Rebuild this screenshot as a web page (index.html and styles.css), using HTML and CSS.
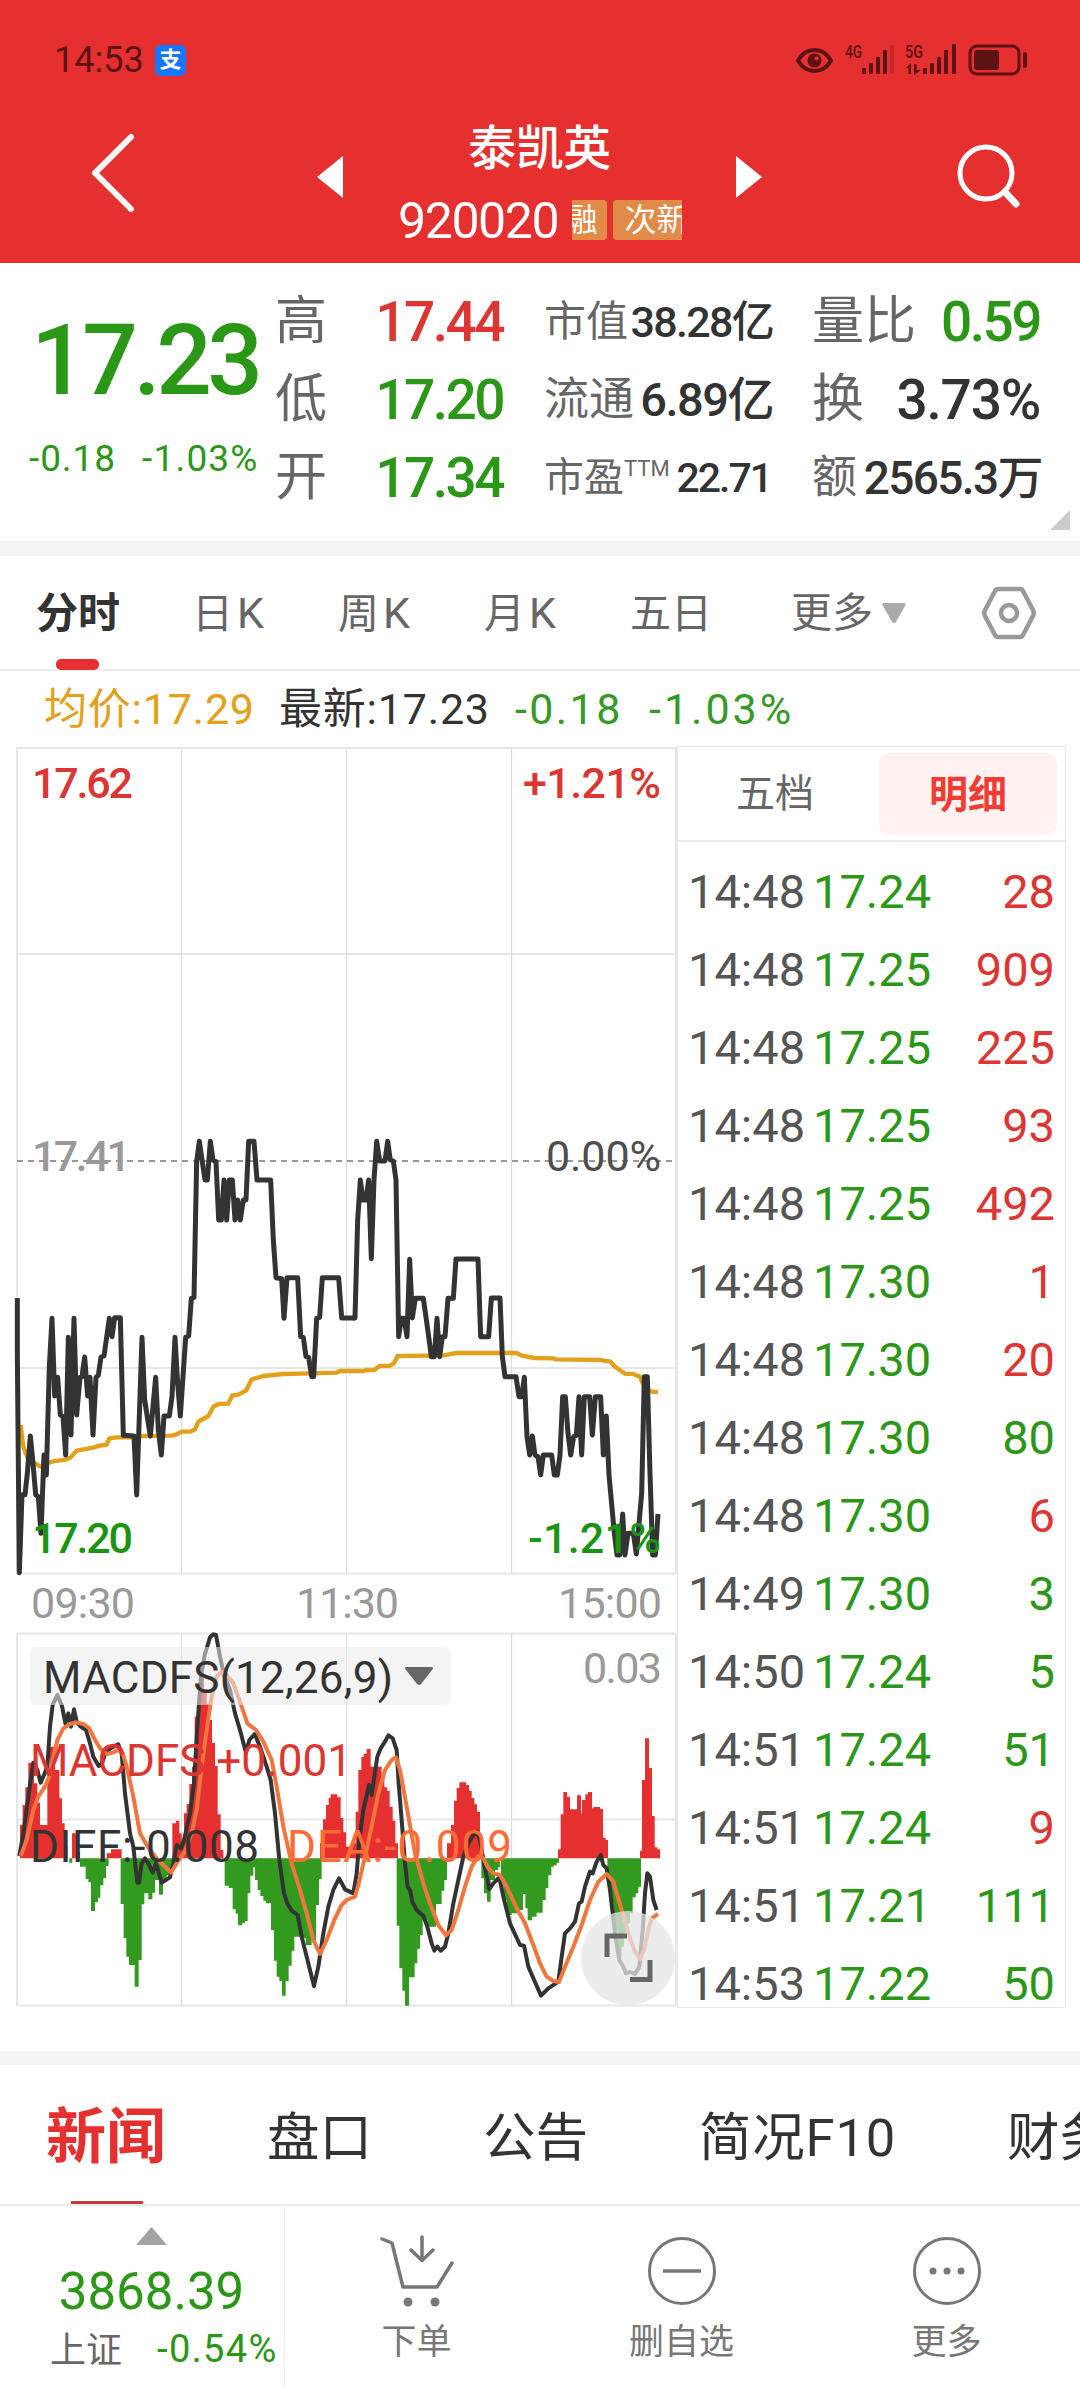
FILE: index.html
```html
<!DOCTYPE html>
<html lang="zh-CN">
  <head>
    <meta charset="UTF-8" />
    <meta name="viewport" content="width=device-width, initial-scale=1.0" />
    <title>泰凯英 920020</title>
    <link rel="stylesheet" href="styles.css">
  </head>
  <body>
    <header class="header">
      <div class="status-bar">
        <span class="clock">14:53</span>
        <span class="pay-badge">支</span>
        <svg class="status-icons" width="236" height="44" viewBox="794 38 236 44">
          <g fill="none" stroke="#5c1213" stroke-width="4">
            <path d="M798 60.500Q804 50 814.500 50T831 60.500Q825 71 814.500 71T798 60.500Z" />
            <rect x="970" y="46" width="49" height="28" rx="7" stroke-width="3" />
          </g>
          <g fill="#5c1213">
            <circle cx="814.500" cy="60.500" r="7" />
            <rect x="974" y="50" width="25" height="20" rx="3" />
            <rect x="1023" y="52" width="4" height="16" rx="2" />
            <rect x="862" y="68" width="4" height="6" rx="1" />
            <rect x="869" y="63" width="4" height="11" rx="1" />
            <rect x="876" y="57" width="4" height="17" rx="1" />
            <rect x="883" y="50" width="4" height="24" rx="1" />
            <rect x="890" y="45" width="4" height="29" rx="1" opacity=".25" />
            <rect x="923" y="68" width="4" height="6" rx="1" />
            <rect x="930" y="63" width="4" height="11" rx="1" />
            <rect x="937" y="57" width="4" height="17" rx="1" />
            <rect x="944" y="50" width="4" height="24" rx="1" />
            <rect x="952" y="44" width="4" height="30" rx="1" />
            <path d="M906 68L911 63V74H908.500V68ZM914 64H916.500V70H921L914 75Z" />
            <text class="net" x="845" y="58" textLength="17" lengthAdjust="spacingAndGlyphs">4G</text>
            <text class="net" x="905" y="58" textLength="18" lengthAdjust="spacingAndGlyphs">5G</text>
          </g>
          <circle cx="816.500" cy="58.500" r="2" fill="#e62f2f" />
        </svg>
      </div>
      <div class="title-bar">
        <svg class="back" width="52" height="84" viewBox="0 0 52 84">
          <path d="M43 6L7 42L43 78" fill="none" stroke="#fff" stroke-width="6" stroke-linecap="round" stroke-linejoin="round" />
        </svg>
        <svg class="prev" width="26" height="42" viewBox="0 0 26 42"><path d="M26 0V42L0 21Z" fill="#fff" /></svg>
        <div class="stock">
          <h1 class="stock-name">泰凯英</h1>
          <div class="stock-meta">
            <span class="stock-code">920020</span>
            <span class="tags">
              <span class="tag tag-first">融</span>
              <span class="tag tag-new">次新</span>
            </span>
          </div>
        </div>
        <svg class="next" width="26" height="42" viewBox="0 0 26 42"><path d="M0 0V42L26 21Z" fill="#fff" /></svg>
        <svg class="search" width="68" height="68" viewBox="0 0 68 68">
          <g fill="none" stroke="#fff" stroke-linecap="round">
            <circle cx="31" cy="31" r="26" stroke-width="5" />
            <path d="M50 50L61 62" stroke-width="7" />
          </g>
        </svg>
      </div>
    </header>

    <section class="quote">
      <div class="price">
        <div class="last">17.23</div>
        <div class="change"><span class="chg-abs">-0.18</span><span class="chg-pct">-1.03%</span></div>
      </div>
      <div class="col col-range">
        <div class="cell"><span class="label">高</span><b class="up">17.44</b></div>
        <div class="cell"><span class="label">低</span><b class="down">17.20</b></div>
        <div class="cell"><span class="label">开</span><b class="down">17.34</b></div>
      </div>
      <div class="col col-value">
        <div class="cell cap"><span class="label">市值</span><b>38.28亿</b></div>
        <div class="cell float"><span class="label">流通</span><b>6.89亿</b></div>
        <div class="cell pe"><span class="label">市盈<sup>TTM</sup></span><b>22.71</b></div>
      </div>
      <div class="col col-ratio">
        <div class="cell"><span class="label">量比</span><b class="down">0.59</b></div>
        <div class="cell turnover"><span class="label">换</span><b>3.73%</b></div>
        <div class="cell amount"><span class="label">额</span><b>2565.3万</b></div>
      </div>
      <svg class="expand" width="20" height="20" viewBox="0 0 20 20"><path d="M20 0V20H0Z" fill="#ccc" /></svg>
    </section>

    <nav class="periods">
      <span class="period active">分时</span>
      <span class="period">日<i>K</i></span>
      <span class="period">周<i>K</i></span>
      <span class="period">月<i>K</i></span>
      <span class="period">五日</span>
      <span class="period more">更多<svg width="24" height="20" viewBox="0 0 24 20"><path d="M1 0H23Q24 1 23 3L14 19Q12 21 10 19L1 3Q0 1 1 0Z" fill="#aaa" /></svg></span>
      <svg class="gear" width="56" height="54" viewBox="0 0 56 54">
        <g fill="none" stroke="#999" stroke-width="4.500" stroke-linejoin="round">
          <path d="M17 3H39Q41 3 42 5L52 24Q53.500 27 52 30L42 49Q41 51 39 51H17Q15 51 14 49L4 30Q2.500 27 4 24L14 5Q15 3 17 3Z" />
          <circle cx="28" cy="27" r="8" />
        </g>
      </svg>
    </nav>

    <div class="summary">
      <span class="avg">均价:17.29</span>
      <span class="latest">最新:17.23</span>
      <span class="sum-abs">-0.18</span>
      <span class="sum-pct">-1.03%</span>
    </div>

    <main class="board">
      <svg class="chart" width="677" height="1265" viewBox="0 746 677 1265">
        <!-- grid -->
        <g fill="none" stroke="#e6e6e6" stroke-width="2">
          <path d="M17 748H677M17 954H677M17 1368H677M17 1573.500H677M17 747V1574M676 747V1574" />
          <path d="M17 1633.500H677M17 1819.500H677M17 2005.500H677M17 1633V2006M676 1633V2006" />
          <path d="M181.500 748V1573M346.500 748V1573M511.500 748V1573M181.500 1633V2006M346.500 1633V2006M511.500 1633V2006" stroke-width="1.200" stroke="#dcdcdc" />
        </g>
        <path d="M17 1161H677" stroke="#999" stroke-width="1.800" stroke-dasharray="6 5" />

        <!-- average price -->
        <g fill="none" stroke="#e3a01b" stroke-width="13" stroke-linejoin="round">
          <polyline transform="translate(0 1100) scale(.33333)" points="62,975 70,1040 85,1080 105,1090 122,1100 140,1090 160,1084 200,1078 212,1072 230,1052 280,1043 295,1038 320,1034 328,1015 350,1012 400,1012 430,1008 515,1007 530,1003 545,995 570,995 585,988 595,965 625,948 640,920 655,912 685,911 697,886 715,884 738,872 755,838 790,828 850,822 930,820 1010,818 1020,813 1090,813 1100,810 1123,810 1138,798 1170,797 1182,790 1193,768 1285,767 1330,766 1370,759 1550,759 1565,767 1605,774 1660,775 1670,778 1800,780 1815,783 1830,784 1845,800 1875,821 1900,822 1920,830 1928,850 1940,868 1955,875 1974,876" />
        </g>
        <!-- price -->
        <g fill="none" stroke="#333" stroke-width="15" stroke-linejoin="round">
          <polyline transform="translate(0 1100) scale(.33333)" points="52,594 52,760 58,1418 66,1184 75,1184 82,1120 91,1008 99,1090 107,1184 115,1190 123,1300 132,1065 139,1125 148,800 156,655 164,888 173,832 181,945 189,950 197,1065 205,712 213,1005 222,655 230,945 240,832 246,830 254,771 263,888 270,832 279,1005 288,832 295,826 303,771 312,768 328,655 336,710 344,653 361,653 370,1006 402,1008 410,1185 426,712 434,900 451,1008 467,832 475,990 484,1065 492,948 508,948 516,890 525,712 533,850 541,948 557,712 566,708 574,595 582,592 590,185 598,124 615,240 622,240 631,124 639,180 648,185 656,360 664,360 672,240 680,360 688,240 697,240 705,360 713,300 721,360 730,300 738,300 746,124 762,124 771,240 812,240 820,420 828,533 845,536 852,655 861,533 893,533 902,710 910,712 918,770 926,772 935,830 941,830 950,655 959,652 967,533 1016,533 1025,654 1065,654" />
          <polyline transform="translate(340 1100) scale(.33333)" points="40,654 45,654 53,360 61,240 69,300 78,300 86,240 94,476 102,240 110,124 119,183 135,183 143,124 151,180 160,183 168,240 176,710 184,655 192,655 201,710 209,478 217,654 226,595 250,595 262,680 274,770 283,770 291,655 299,770 307,710 315,710 324,595 340,595 348,477 414,477 422,710 446,710 454,594 480,594 487,770 495,830 528,830 537,890 545,890 553,832 561,1010 569,1065 577,1008 585,1065 594,1070 602,1125 610,1065 635,1065 643,1125 652,1125 660,1065 668,890 676,890 684,1000 692,1065 701,1010 709,1006 717,890 725,1065 733,890 749,890 757,1005 766,890 782,890 790,1065 799,948 807,1125 823,1300 831,1365 839,1365 848,1242 855,1365 864,1300 880,1300 889,1362 905,1180 913,830 922,830 930,1120 938,1365 946,1365 954,1242" />
        </g>

        <!-- MACD histogram -->
        <g transform="translate(0 1580) scale(.33333)">
          <path fill="#e62f2f" d="M60 835V735H68V675H76V622H85V548H102V610H112V668H120V735H142V570H150V500H165V570H178V655H186V730H194V800H202V835ZM216 835V760H228V815H240V835ZM320 835V820H333V808H365V835ZM517 835V730H528V722H538V760H545V790H552V700H560V672H568V612H576V560H584V410H592V350H600V290H612V330H620V372H628V420H636V488H645V558H653V703H662V810H670V835ZM960 835V790H969V718H978V675H986V654H992V643H1012V652H1022V714H1030V757H1038V800H1047V835Z" />
          <path fill="#329b1f" d="M208 835V848H217V835ZM240 835V860H257V897H265V907H273V993H285V966H294V953H301V915H310V895H318V858H326V835ZM362 835V972H371V1074H379V1130H387V1155H404V1220H416V1140H425V973H433V940H445V958H457V938H465V900H477V944H489V905H500V885H513V850H520V835ZM674 835V917H686V924H698V988H707V1001H714V1036H727V1029H735V1023H743V940H751V887H760V862H765V900H773V930H781V948H790V962H798V970H813V1050H822V1142H830V1190H838V1203H846V1247H857V1203H866V1157H875V1112H883V1070H900V1075H917V1095H935V1080H948V975H957V897H965V835Z" />
        </g>
        <g transform="translate(340 1580) scale(.33333)">
          <path fill="#e62f2f" d="M25 835V800H39V790H47V695H55V570H64V531H71V521H80V507H92V560H125V585H133V622H141V632H149V680H158V722H166V790H174V835ZM321 835V790H333V735H342V662H350V624H358V607H378V615H387V632H395V654H403V673H411V695H420V835ZM654 835V808H662V703H670V636H681V650H690V688H711V646H723V700H726V660H736V643H744V636H756V685H760V681H780V687H789V773H797V780H804V835ZM900 835V812H906V600H915V475H927V564H936V708H944V802H952V808H960V835Z" />
          <path fill="#329b1f" d="M170 835V1037H178V1165H187V1232H195V1277H207V1192H224V1150H232V1106H240V1065H248V1020H262V1040H288V972H305V932H313V900H321V835ZM424 835V895H432V940H441V965H452V900H465V870H474V862H480V835ZM483 835V905H490V960H500V1005H515V1000H540V990H549V942H556V985H563V1021H576V1010H590V998H608V960H617V925H625V885H634V860H642V856H650V848H657V835ZM802 835V900H810V970H820V1050H832V1130H845V1100H852V1060H860V1030H870V1000H878V952H887V940H895V920H903V835Z" />
        </g>

        <!-- DIFF / DEA -->
        <g fill="none" stroke="#333" stroke-width="12" stroke-linejoin="round">
          <polyline transform="translate(0 1580) scale(.33333)" points="58,828 70,760 92,600 100,548 112,570 122,608 132,585 142,560 150,440 158,375 172,345 186,378 196,430 205,400 213,440 222,388 230,425 242,440 258,450 270,490 280,530 296,558 305,553 316,520 330,505 355,493 365,520 375,640 390,760 400,800 412,908 417,908 425,850 435,835 445,850 458,878 468,850 485,908 510,892 520,850 530,795 543,805 552,780 570,700 582,610 592,440 603,290 614,225 630,172 640,163 648,165 660,230 672,285 690,330 705,400 720,450 738,518 748,480 764,462 780,500 800,560 812,600 825,700 838,840 852,940 862,970 875,992 893,1005 905,1070 920,1130 942,1218 955,1160 970,1060 985,980 1000,930 1017,895 1035,928 1060,940 1070,880 1078,780 1090,690 1107,615 1115,645 1123,590 1132,530 1142,505 1155,485 1165,466 1178,475 1190,510 1196,610 1205,720 1215,850 1223,922 1230,930 1237,965 1250,990 1270,1008 1282,1040 1295,1090 1303,1112 1312,1100 1322,1112 1335,1100 1345,1060 1360,970 1375,900 1390,830 1405,790 1420,765 1432,755 1440,780 1452,850 1468,927 1480,910 1498,892 1510,950 1530,1030 1560,1095 1572,1097 1585,1160 1600,1195 1623,1247 1645,1225 1675,1205 1685,1130 1695,1060 1710,1045 1725,1025 1737,970 1745,965 1755,920 1770,875 1778,880 1790,845 1802,825 1810,855 1820,865 1830,930 1845,1060 1858,1140 1870,1160 1878,1180 1890,1176 1905,1182 1918,1160 1928,1050 1935,940 1942,880 1950,890 1960,960 1970,990" />
        </g>
        <g fill="none" stroke="#f0753f" stroke-width="12" stroke-linejoin="round">
          <polyline transform="translate(0 1580) scale(.33333)" points="62,828 80,780 100,690 115,650 135,620 148,590 158,540 172,480 190,445 210,432 228,427 250,432 268,445 285,480 300,505 320,522 340,517 355,510 368,520 380,560 400,650 420,760 440,795 465,830 490,855 513,878 530,850 555,815 575,760 590,690 605,560 620,450 635,350 650,290 665,275 680,285 700,310 720,365 742,430 768,450 790,485 815,540 830,620 850,740 875,850 900,930 920,1000 940,1080 960,1122 980,1080 1005,1015 1025,975 1040,960 1065,950 1075,915 1095,830 1115,740 1135,640 1155,570 1175,540 1188,532 1200,570 1220,680 1245,820 1270,910 1290,970 1315,1035 1338,1066 1355,1050 1375,990 1395,920 1415,860 1435,828 1450,835 1465,865 1480,880 1500,885 1520,920 1550,985 1575,1030 1600,1095 1620,1150 1640,1190 1660,1203 1677,1206 1695,1160 1720,1100 1745,1035 1770,960 1795,905 1820,882 1840,905 1865,990 1890,1075 1905,1115 1920,1137 1932,1110 1945,1050 1955,1015 1974,1002" />
        </g>

        <!-- indicator picker -->
        <rect x="30" y="1647" width="421" height="58" rx="6" fill="#ebebeb" opacity=".55" />
        <path d="M406 1667H432Q434 1668 432 1670L421 1684Q419 1686 417 1684L406 1670Q404 1668 406 1667Z" fill="#666" />

        <g class="axis">
          <text class="t-up strong" x="32" y="798" textLength="101">17.62</text>
          <text class="t-up strong" x="523" y="798" textLength="138">+1.21%</text>
          <text class="t-mute strong" x="32" y="1171" textLength="99">17.41</text>
          <text class="t-dark" x="546" y="1171" textLength="115">0.00%</text>
          <text class="t-down strong" x="32" y="1553" textLength="101">17.20</text>
          <text class="t-down strong" x="528" y="1553" textLength="133">-1.21%</text>
          <text class="t-mute" x="31" y="1618" textLength="104">09:30</text>
          <text class="t-mute" x="296" y="1618" textLength="103">11:30</text>
          <text class="t-mute" x="558" y="1618" textLength="104">15:00</text>
          <text class="t-mute" x="583" y="1683" textLength="79">0.03</text>
        </g>
        <g class="axis macd">
          <text class="t-ink" x="43" y="1693" textLength="350">MACDFS(12,26,9)</text>
          <text class="t-up" x="30" y="1776" textLength="322">MACDFS:+0.001</text>
          <text class="t-ink" x="30" y="1862" textLength="229">DIFF:-0.008</text>
          <text class="t-dea" x="287" y="1862" textLength="225">DEA:-0.009</text>
        </g>

        <!-- fullscreen button -->
        <circle cx="628" cy="1958" r="47" fill="#e6e6e6" opacity=".75" />
        <path d="M607 1957V1936H627M650 1960V1979.500H630" fill="none" stroke="#666" stroke-width="5" />
      </svg>

      <aside class="ticks">
        <div class="tick-tabs">
          <span class="tick-tab">五档</span>
          <span class="tick-tab on">明细</span>
        </div>
        <div class="tick-list">
          <div class="tick"><span>14:48</span><span class="down">17.24</span><span class="up">28</span></div>
          <div class="tick"><span>14:48</span><span class="down">17.25</span><span class="up">909</span></div>
          <div class="tick"><span>14:48</span><span class="down">17.25</span><span class="up">225</span></div>
          <div class="tick"><span>14:48</span><span class="down">17.25</span><span class="up">93</span></div>
          <div class="tick"><span>14:48</span><span class="down">17.25</span><span class="up">492</span></div>
          <div class="tick"><span>14:48</span><span class="down">17.30</span><span class="up">1</span></div>
          <div class="tick"><span>14:48</span><span class="down">17.30</span><span class="up">20</span></div>
          <div class="tick"><span>14:48</span><span class="down">17.30</span><span class="down">80</span></div>
          <div class="tick"><span>14:48</span><span class="down">17.30</span><span class="up">6</span></div>
          <div class="tick"><span>14:49</span><span class="down">17.30</span><span class="down">3</span></div>
          <div class="tick"><span>14:50</span><span class="down">17.24</span><span class="down">5</span></div>
          <div class="tick"><span>14:51</span><span class="down">17.24</span><span class="down">51</span></div>
          <div class="tick"><span>14:51</span><span class="down">17.24</span><span class="up">9</span></div>
          <div class="tick"><span>14:51</span><span class="down">17.21</span><span class="down">111</span></div>
          <div class="tick"><span>14:53</span><span class="down">17.22</span><span class="down">50</span></div>
        </div>
      </aside>
    </main>

    <nav class="info-tabs">
      <span class="info-tab current">新闻</span>
      <span class="info-tab">盘口</span>
      <span class="info-tab">公告</span>
      <span class="info-tab f10">简况F10</span>
      <span class="info-tab">财务</span>
    </nav>

    <footer class="toolbar">
      <div class="index">
        <svg width="31" height="18" viewBox="0 0 31 18"><path d="M15.500 0L31 18H0Z" fill="#a3a3a3" /></svg>
        <div class="index-value">3868.39</div>
        <div class="index-row"><span class="index-name">上证</span><span class="index-pct">-0.54%</span></div>
      </div>
      <div class="action">
        <svg width="76" height="72" viewBox="0 0 76 72">
          <g fill="none" stroke="#777" stroke-width="3.500" stroke-linecap="round" stroke-linejoin="round">
            <path d="M3 4L13 8L24 52H58L73 28" />
            <path d="M43 2V25M32 15L43 25.500L54 15" />
          </g>
          <circle cx="29" cy="67" r="4.500" fill="#777" />
          <circle cx="56" cy="67" r="4.500" fill="#777" />
        </svg>
        <span>下单</span>
      </div>
      <div class="action">
        <svg width="72" height="72" viewBox="0 0 72 72">
          <circle cx="36" cy="36" r="32.500" fill="none" stroke="#777" stroke-width="3" />
          <path d="M17 36H55" stroke="#777" stroke-width="3.500" />
        </svg>
        <span>删自选</span>
      </div>
      <div class="action">
        <svg width="72" height="72" viewBox="0 0 72 72">
          <circle cx="36" cy="36" r="32.500" fill="none" stroke="#777" stroke-width="3" />
          <g fill="#777"><circle cx="22" cy="36" r="3.500" /><circle cx="36" cy="36" r="3.500" /><circle cx="50" cy="36" r="3.500" /></g>
        </svg>
        <span>更多</span>
      </div>
    </footer>
  </body>
</html>
```
FILE: styles.css
```css
* {
  box-sizing: border-box;
}
body {
  margin: 0;
  width: 1080px;
  height: 2388px;
  overflow: hidden;
  background: #fff;
  color: #333;
  font-family: Roboto, "Noto Sans CJK SC", sans-serif;
}
svg {
  display: block;
  flex: none;
}
.up {
  color: #dc3532;
}
.down {
  color: #2b9717;
}

/* header */
.header {
  height: 263px;
  background: #e62f2f;
  color: #fff;
}
.status-bar {
  display: flex;
  align-items: center;
  height: 120px;
  padding: 0 50px 0 54px;
}
.clock {
  width: 101px;
  font-size: 36px;
  color: #5c1213;
}
.pay-badge {
  width: 31px;
  height: 31px;
  border-radius: 6px;
  background: #1677ff;
  font-size: 22px;
  font-weight: 700;
  line-height: 30px;
  text-align: center;
}
.status-icons {
  margin-left: auto;
}
.net {
  font-size: 19px;
  font-weight: 500;
}
.title-bar {
  display: flex;
  align-items: flex-start;
  height: 143px;
}
.back {
  margin: 11px 0 0 88px;
}
.prev {
  margin: 36px 0 0 177px;
}
.stock {
  width: 393px;
  text-align: center;
}
.stock-name {
  margin: 0;
  height: 54px;
  font-size: 48px;
  font-weight: 500;
  line-height: 58px;
  letter-spacing: -0.5px;
}
.stock-meta {
  display: flex;
  align-items: center;
  height: 92px;
  padding: 0 54px 0 55px;
}
.stock-code {
  width: 175px;
  padding-top: 2px;
  font-size: 50px;
  letter-spacing: -1.4px;
  text-align: left;
}
.tags {
  display: flex;
  gap: 6px;
  width: 110px;
  overflow: hidden;
}
.tag {
  flex: none;
  height: 40px;
  background: #e28b48;
  border-radius: 4px;
  font-size: 32px;
  line-height: 40px;
}
.tag-first {
  display: flex;
  justify-content: flex-end;
  width: 35px;
  padding-right: 10px;
  border-radius: 0 4px 4px 0;
  overflow: hidden;
}
.tag-new {
  width: 80px;
  padding-left: 11px;
  text-align: left;
  white-space: nowrap;
}
.next {
  margin-top: 36px;
}
.search {
  margin: 22px 0 0 193px;
}

/* quote */
.quote {
  display: flex;
  height: 293px;
  padding-top: 19px;
  border-bottom: 15px solid #f4f4f4;
}
.price {
  width: 275px;
  color: #2b9717;
}
.last {
  height: 118px;
  padding: 20px 0 0 31px;
  font-size: 98px;
  font-weight: 500;
  line-height: 118px;
  letter-spacing: -4.5px;
}
.change {
  display: flex;
  padding-left: 29px;
  margin-top: 37px;
  font-size: 37px;
  line-height: 44px;
}
.chg-abs {
  width: 113px;
  letter-spacing: 0.9px;
}
.chg-pct {
  letter-spacing: 1.2px;
}
.cell {
  display: flex;
  justify-content: space-between;
  align-items: center;
  height: 78px;
  line-height: 78px;
  white-space: nowrap;
}
.cell b {
  padding-top: 2px;
  margin-right: 4px;
  font-size: 55px;
  font-weight: 500;
  letter-spacing: -2.5px;
}
.label {
  font-size: 52px;
  color: #666;
  line-height: 70px;
  margin-top: 2px;
}
.col-range {
  width: 232px;
}
.col-value {
  width: 233px;
  margin-left: 37px;
}
.col-ratio {
  width: 232px;
  margin-left: 35px;
}
.cap .label {
  font-size: 42px;
}
.cap b {
  font-size: 43px;
  letter-spacing: -1.7px;
}
.float .label {
  font-size: 45px;
}
.float b {
  font-size: 47px;
  letter-spacing: -1.5px;
}
.pe .label {
  font-size: 40px;
}
.pe sup {
  font-size: 22px;
  vertical-align: 15px;
  line-height: 0;
}
.pe b {
  font-size: 41px;
  letter-spacing: -2px;
  margin-right: 6px;
}
.turnover b {
  letter-spacing: -1.2px;
}
.amount .label {
  font-size: 45px;
}
.amount b {
  margin-right: 2px;
  font-size: 46px;
  letter-spacing: -1.6px;
}
.expand {
  align-self: flex-end;
  margin: 0 0 11px 6px;
}

/* period tabs */
.periods {
  display: flex;
  align-items: center;
  height: 115px;
  padding-left: 36px;
  border-bottom: 2px solid #ebebeb;
  font-size: 41px;
  color: #666;
}
.period {
  width: 146px;
  height: 113px;
  line-height: 116px;
  white-space: nowrap;
}
.period i {
  margin-left: 4px;
  font-size: 43px;
  font-style: normal;
  line-height: 0;
}
.period.active {
  width: 156px;
  color: #333;
  font-size: 42px;
  font-weight: 700;
}
.period.active::after {
  content: "";
  display: block;
  width: 43px;
  height: 11px;
  margin: -13px 0 0 20px;
  border-radius: 5px;
  background: #e62f2f;
}
.period.more {
  display: flex;
  align-items: center;
  gap: 9px;
  width: 190px;
  margin-left: 15px;
}

/* summary line */
.summary {
  display: flex;
  height: 75px;
  padding-left: 44px;
  font-size: 43px;
  line-height: 76px;
  letter-spacing: 0.8px;
  white-space: nowrap;
}
.avg {
  width: 235px;
  color: #e3a01b;
}
.latest {
  width: 236px;
}
.sum-abs {
  width: 134px;
  letter-spacing: 2.4px;
  color: #359a26;
}
.sum-pct {
  letter-spacing: 3px;
  color: #359a26;
}

/* chart and ticks */
.board {
  display: flex;
  align-items: flex-start;
  height: 1305px;
}
.axis {
  font-size: 43px;
}
.axis .strong {
  font-weight: 500;
}
.macd {
  font-size: 44px;
}
.t-up {
  fill: #dc3532;
}
.t-down {
  fill: #1a9412;
}
.t-mute {
  fill: #999;
}
.t-dark {
  fill: #4d4d4d;
}
.t-ink {
  fill: #333;
}
.t-dea {
  fill: #ff6b35;
}
.ticks {
  width: 389px;
  height: 1262px;
  border: 1.5px solid #e8e8e8;
}
.tick-tabs {
  display: flex;
  align-items: center;
  height: 95px;
  border-bottom: 2px solid #ebebeb;
  font-size: 39px;
}
.tick-tab {
  width: 194px;
  line-height: 84px;
  text-align: center;
  color: #666;
}
.tick-tab.on {
  width: 178px;
  height: 82px;
  margin-left: 7px;
  border-radius: 12px;
  background: #fff2f1;
  color: #f03c32;
  font-weight: 700;
}
.tick-list {
  padding: 11px 10px 0 10px;
}
.tick {
  display: flex;
  height: 78px;
  font-size: 47px;
  line-height: 78px;
  color: #555;
}
.tick span {
  width: 125px;
}
.tick span:last-child {
  flex: 1;
  text-align: right;
}

/* news tabs */
.info-tabs {
  display: flex;
  height: 155px;
  padding-left: 46px;
  border-top: 14px solid #f4f4f4;
  border-bottom: 2px solid #ebebeb;
  font-size: 52.5px;
  line-height: 146px;
  white-space: nowrap;
  overflow: hidden;
}
.info-tab {
  flex: none;
  width: 216px;
}
.info-tab.current {
  width: 221px;
  font-size: 60px;
  font-weight: 700;
  color: #e62f2f;
}
.info-tab.current::after {
  content: "";
  display: block;
  width: 72px;
  height: 3px;
  margin: -10px 0 0 25px;
  background: #c93a3a;
}
.info-tab.f10 {
  width: 308px;
  letter-spacing: 0.8px;
}

/* bottom toolbar */
.toolbar {
  display: flex;
  height: 182px;
}
.index {
  display: flex;
  flex-direction: column;
  align-items: center;
  width: 285px;
  padding-top: 21px;
  border-right: 1.5px solid #ebebeb;
}
.index svg {
  margin-left: 18px;
}
.index-value {
  margin: 16px 0 0 19px;
  font-size: 51px;
  line-height: 62px;
  color: #2b9717;
}
.index-row {
  display: flex;
  align-self: flex-start;
  align-items: center;
  margin: 4px 0 0 50px;
  height: 40px;
  white-space: nowrap;
}
.index-name {
  width: 107px;
  font-size: 36px;
  color: #666;
}
.index-pct {
  padding-top: 3px;
  font-size: 38px;
  letter-spacing: 1.4px;
  color: #2b9717;
}
.action {
  display: flex;
  flex: 1;
  flex-direction: column;
  align-items: center;
  gap: 8px;
  padding: 29px 2px 0 0;
  font-size: 35px;
  line-height: 56px;
  color: #777;
}
```
